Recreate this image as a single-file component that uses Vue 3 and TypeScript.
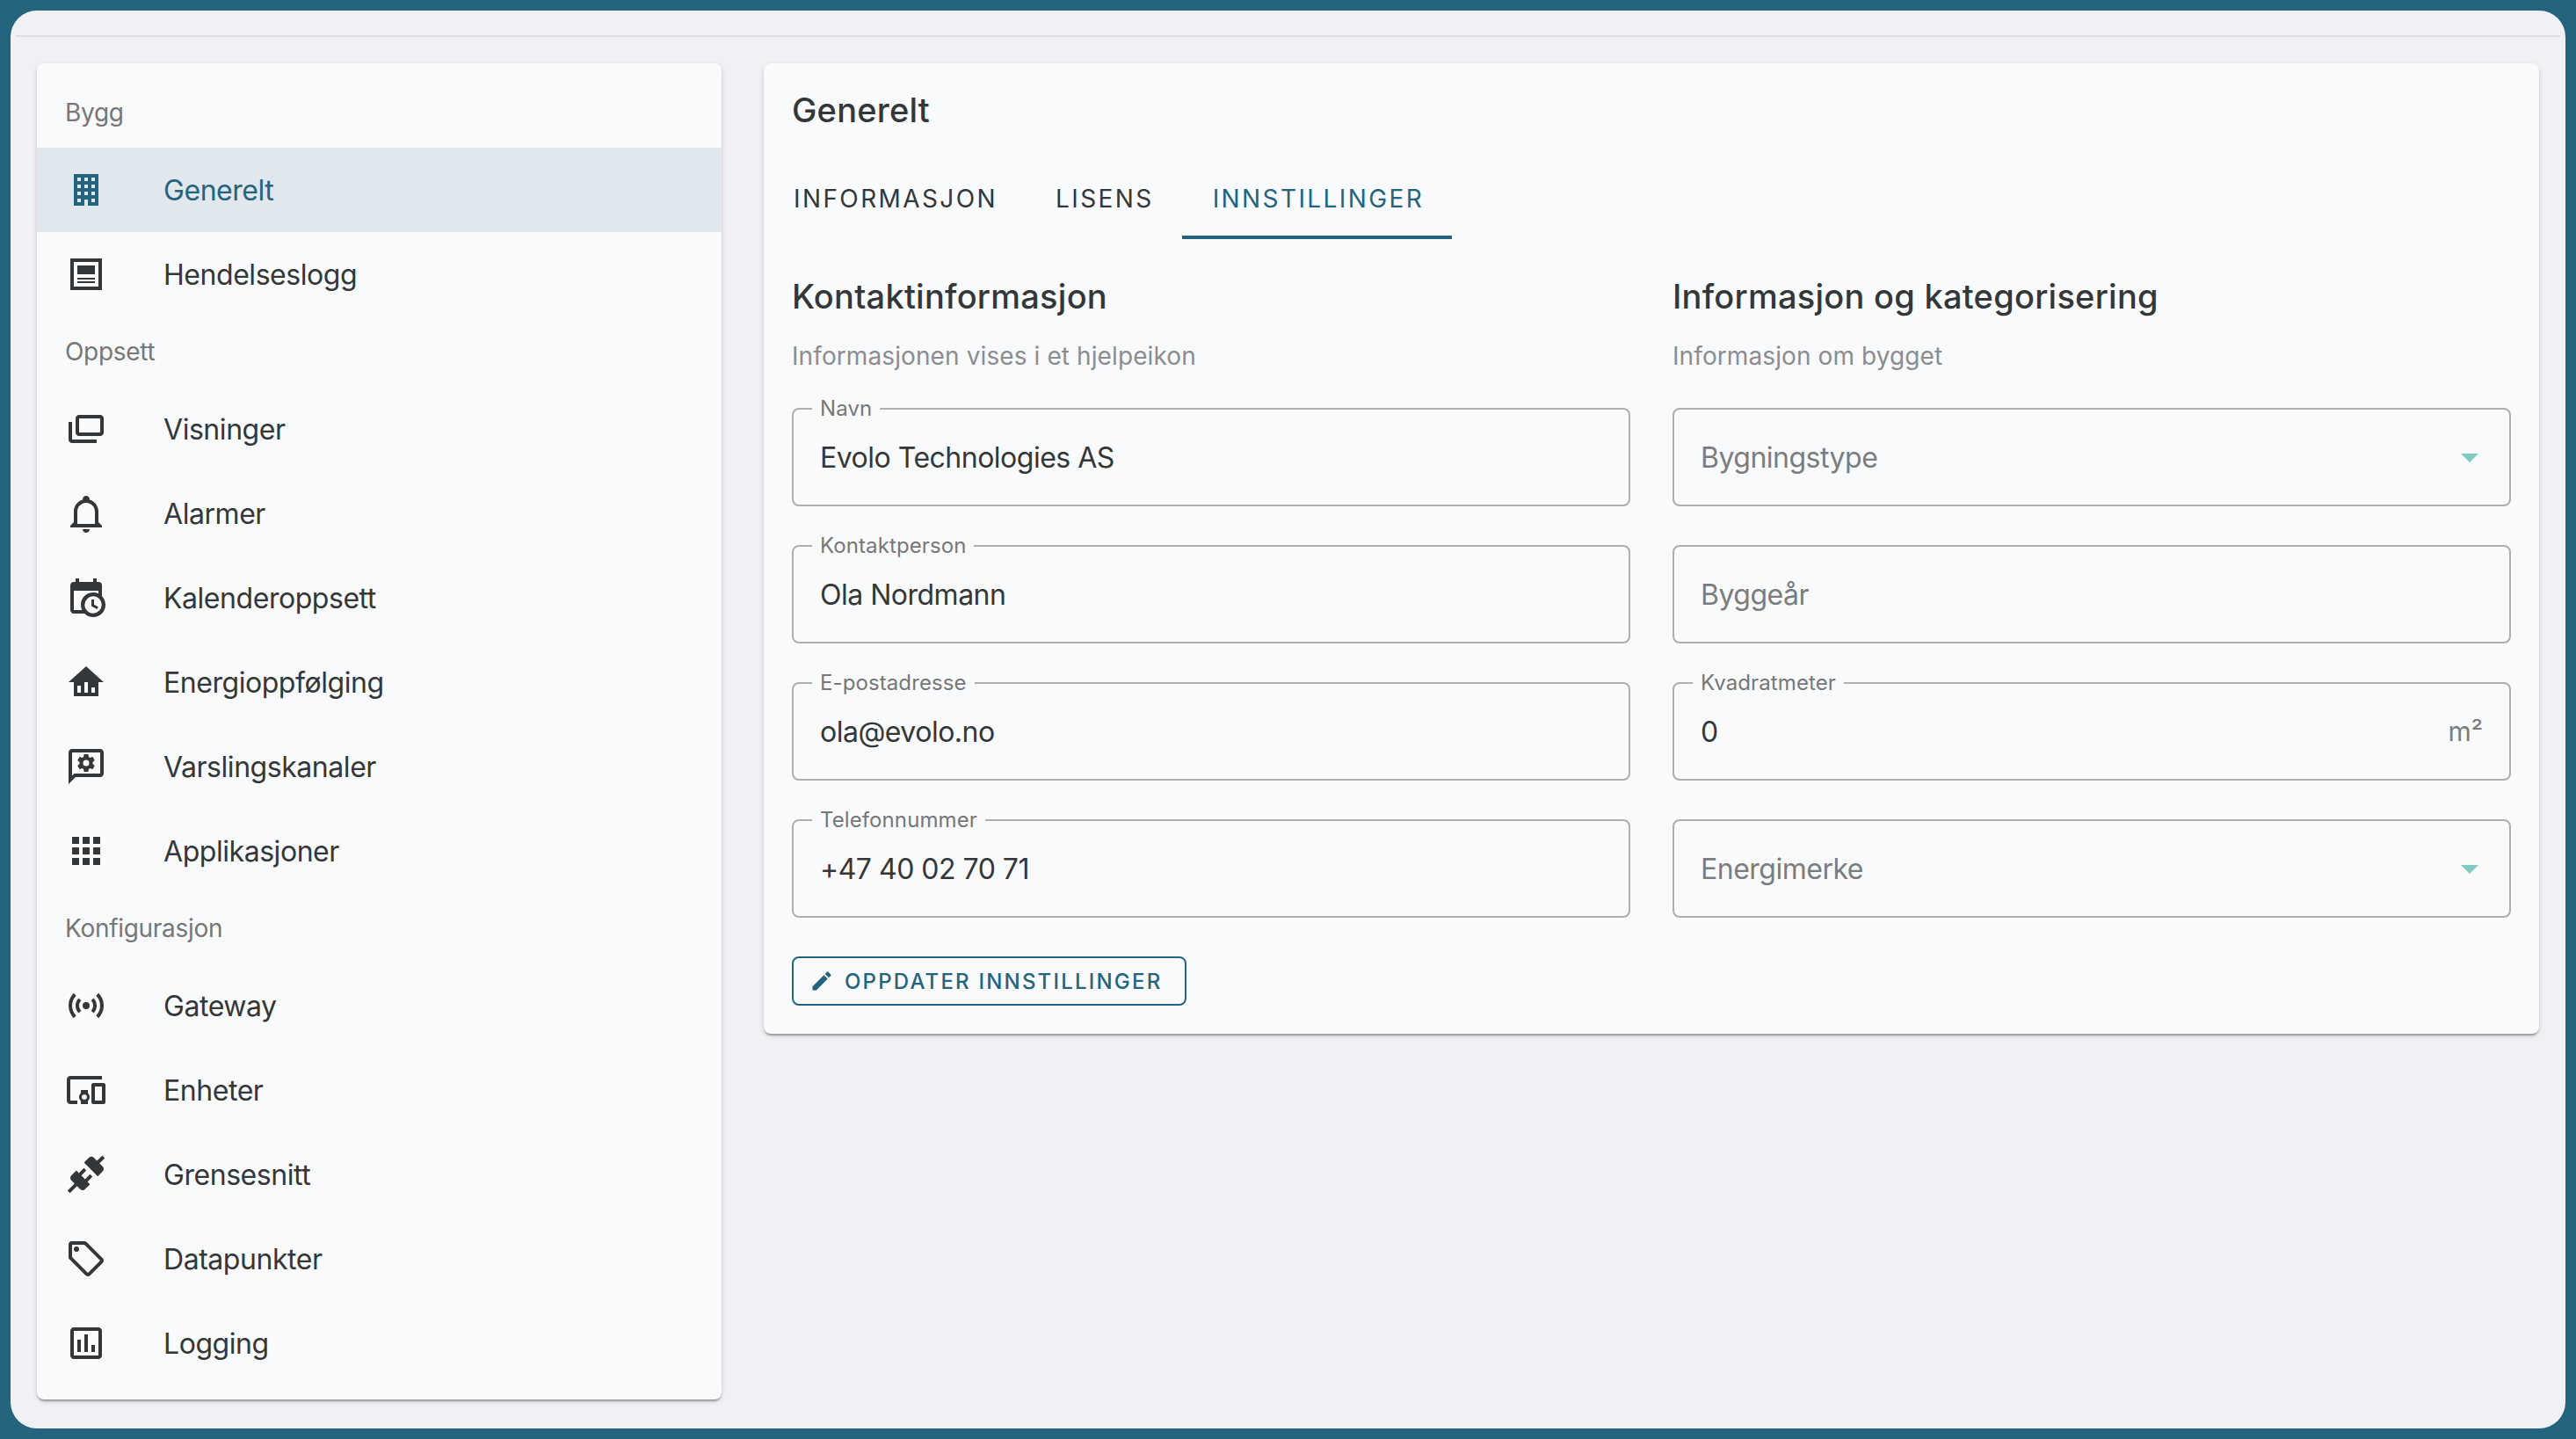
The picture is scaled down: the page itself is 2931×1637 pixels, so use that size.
<script setup lang="ts">
interface NavItem {
  label: string
  icon: string
  active?: boolean
}

interface NavGroup {
  title: string
  items: NavItem[]
}

interface Field {
  label: string
  value?: string
  placeholder?: string
  suffix?: string
  select?: boolean
}

const cog = 'M12,15.5A3.5,3.5 0 0,1 8.5,12A3.5,3.5 0 0,1 12,8.5A3.5,3.5 0 0,1 15.5,12A3.5,3.5 0 0,1 12,15.5M19.43,12.97C19.47,12.65 19.5,12.33 19.5,12C19.5,11.67 19.47,11.34 19.43,11L21.54,9.37C21.73,9.22 21.78,8.95 21.66,8.73L19.66,5.27C19.54,5.05 19.27,4.96 19.05,5.05L16.56,6.05C16.04,5.66 15.5,5.32 14.87,5.07L14.5,2.42C14.46,2.18 14.25,2 14,2H10C9.75,2 9.54,2.18 9.5,2.42L9.13,5.07C8.5,5.32 7.96,5.66 7.44,6.05L4.95,5.05C4.73,4.96 4.46,5.05 4.34,5.27L2.34,8.73C2.21,8.95 2.27,9.22 2.46,9.37L4.57,11C4.53,11.34 4.5,11.67 4.5,12C4.5,12.33 4.53,12.65 4.57,12.97L2.46,14.63C2.27,14.78 2.21,15.05 2.34,15.27L4.34,18.73C4.46,18.95 4.73,19.03 4.95,18.95L7.44,17.94C7.96,18.34 8.5,18.68 9.13,18.93L9.5,21.58C9.54,21.82 9.75,22 10,22H14C14.25,22 14.46,21.82 14.5,21.58L14.87,18.93C15.5,18.67 16.04,18.34 16.56,17.94L19.05,18.95C19.27,19.03 19.54,18.95 19.66,18.73L21.66,15.27C21.78,15.05 21.73,14.78 21.54,14.63L19.43,12.97Z'

const navGroups: NavGroup[] = [
  {
    title: 'Bygg',
    items: [
      { label: 'Generelt', active: true, icon: 'M5,3V21H11V17.5H13V21H19V3H5M7,5H9V7H7V5M11,5H13V7H11V5M15,5H17V7H15V5M7,9H9V11H7V9M11,9H13V11H11V9M15,9H17V11H15V9M7,13H9V15H7V13M11,13H13V15H11V13M15,13H17V15H15V13M7,17H9V19H7V17M15,17H17V19H15V17Z' },
      { label: 'Hendelseslogg', icon: 'M21,3H3V21H21V3M19,19H5V5H19V19M17,7H7V12H17V7M17,14H7V15H17V14M17,16H7V17H17V16Z' },
    ],
  },
  {
    title: 'Oppsett',
    items: [
      { label: 'Visninger', icon: 'M20 4H8C6.9 4 6 4.9 6 6V14C6 15.1 6.9 16 8 16H20C21.1 16 22 15.1 22 14V6C22 4.9 21.1 4 20 4M20 14H8V6H20V14M4 8H2V18C2 19.1 2.9 20 4 20H18V18H4V8Z' },
      { label: 'Alarmer', icon: 'M10 21H14C14 22.1 13.1 23 12 23S10 22.1 10 21M21 19V20H3V19L5 17V11C5 7.9 7 5.2 10 4.3V4C10 2.9 10.9 2 12 2S14 2.9 14 4V4.3C17 5.2 19 7.9 19 11V17L21 19M17 11C17 8.2 14.8 6 12 6S7 8.2 7 11V18H17V11Z' },
      { label: 'Kalenderoppsett', icon: 'M15,13H16.5V15.82L18.94,17.23L18.19,18.53L15,16.69V13M19,8H5V19H9.67C9.24,18.09 9,17.07 9,16A7,7 0 0,1 16,9C17.07,9 18.09,9.24 19,9.67V8M5,21C3.89,21 3,20.1 3,19V5C3,3.89 3.89,3 5,3H6V1H8V3H16V1H18V3H19A2,2 0 0,1 21,5V11.1C22.24,12.36 23,14.09 23,16A7,7 0 0,1 16,23C14.09,23 12.36,22.24 11.1,21H5M16,11.15A4.85,4.85 0 0,0 11.15,16C11.15,18.68 13.32,20.85 16,20.85A4.85,4.85 0 0,0 20.85,16C20.85,13.32 18.68,11.15 16,11.15Z' },
      { label: 'Energioppfølging', icon: 'M12 3L2 12H5V20H19V12H22L12 3M9 18H7V14H9V18M13 18H11V12H13V18M17 18H15V15H17V18Z' },
      { label: 'Varslingskanaler', icon: 'M20 2H4C2.9 2 2 2.9 2 4V22L6 18H20C21.1 18 22 17.1 22 16V4C22 2.9 21.1 2 20 2M20 16H5.2L4 17.2V4H20V16Z' },
      { label: 'Applikasjoner', icon: 'M16,20H20V16H16M16,14H20V10H16M10,8H14V4H10M16,8H20V4H16M10,14H14V10H10M4,14H8V10H4M4,20H8V16H4M10,20H14V16H10M4,8H8V4H4V8Z' },
    ],
  },
  {
    title: 'Konfigurasjon',
    items: [
      { label: 'Gateway', icon: 'M4.93,4.93C3.12,6.74 2,9.24 2,12C2,14.76 3.12,17.26 4.93,19.07L6.34,17.66C4.89,16.22 4,14.22 4,12C4,9.79 4.89,7.78 6.34,6.34L4.93,4.93M19.07,4.93L17.66,6.34C19.11,7.78 20,9.79 20,12C20,14.22 19.11,16.22 17.66,17.66L19.07,19.07C20.88,17.26 22,14.76 22,12C22,9.24 20.88,6.74 19.07,4.93M7.76,7.76C6.67,8.85 6,10.35 6,12C6,13.65 6.67,15.15 7.76,16.24L9.17,14.83C8.45,14.11 8,13.11 8,12C8,10.89 8.45,9.89 9.17,9.17L7.76,7.76M16.24,7.76L14.83,9.17C15.55,9.89 16,10.89 16,12C16,13.11 15.55,14.11 14.83,14.83L16.24,16.24C17.33,15.15 18,13.65 18,12C18,10.35 17.33,8.85 16.24,7.76M12,10A2,2 0 0,0 10,12A2,2 0 0,0 12,14A2,2 0 0,0 14,12A2,2 0 0,0 12,10Z' },
      { label: 'Enheter', icon: 'M3 6H21V4H3C1.9 4 1 4.9 1 6V18C1 19.1 1.9 20 3 20H7V18H3V6M13 12H9V13.78C8.39 14.33 8 15.11 8 16C8 16.89 8.39 17.67 9 18.22V20H13V18.22C13.61 17.67 14 16.88 14 16S13.61 14.33 13 13.78V12M11 17.5C10.17 17.5 9.5 16.83 9.5 16S10.17 14.5 11 14.5 12.5 15.17 12.5 16 11.83 17.5 11 17.5M22 8H16C15.5 8 15 8.5 15 9V19C15 19.5 15.5 20 16 20H22C22.5 20 23 19.5 23 19V9C23 8.5 22.5 8 22 8M21 18H17V10H21V18Z' },
      { label: 'Grensesnitt', icon: 'M21.4 7.5C22.2 8.3 22.2 9.6 21.4 10.3L18.6 13.1L10.8 5.3L13.6 2.5C14.4 1.7 15.7 1.7 16.4 2.5L18.2 4.3L21.2 1.3L22.6 2.7L19.6 5.7L21.4 7.5M15.6 13.3L14.2 11.9L11.4 14.7L9.3 12.6L12.1 9.8L10.7 8.4L7.9 11.2L6.4 9.8L3.6 12.6C2.8 13.4 2.8 14.7 3.6 15.4L5.4 17.2L1.4 21.2L2.8 22.6L6.8 18.6L8.6 20.4C9.4 21.2 10.7 21.2 11.4 20.4L14.2 17.6L12.8 16.2L15.6 13.3Z' },
      { label: 'Datapunkter', icon: 'M21.41 11.58L12.41 2.58A2 2 0 0 0 11 2H4A2 2 0 0 0 2 4V11A2 2 0 0 0 2.59 12.42L11.59 21.42A2 2 0 0 0 13 22A2 2 0 0 0 14.41 21.41L21.41 14.41A2 2 0 0 0 22 13A2 2 0 0 0 21.41 11.58M13 20L4 11V4H11L20 13M6.5 5A1.5 1.5 0 1 1 5 6.5A1.5 1.5 0 0 1 6.5 5Z' },
      { label: 'Logging', icon: 'M9 17H7V10H9V17M13 17H11V7H13V17M17 17H15V13H17V17M19 19H5V5H19V19.1M19 3H5C3.9 3 3 3.9 3 5V19C3 20.1 3.9 21 5 21H19C20.1 21 21 20.1 21 19V5C21 3.9 20.1 3 19 3Z' },
    ],
  },
]

const tabs = ['Informasjon', 'Lisens', 'Innstillinger']
const activeTab = 'Innstillinger'

const contactFields: Field[] = [
  { label: 'Navn', value: 'Evolo Technologies AS' },
  { label: 'Kontaktperson', value: 'Ola Nordmann' },
  { label: 'E-postadresse', value: 'ola@evolo.no' },
  { label: 'Telefonnummer', value: '+47 40 02 70 71' },
]

const buildingFields: Field[] = [
  { label: 'Bygningstype', placeholder: 'Bygningstype', select: true },
  { label: 'Byggeår', placeholder: 'Byggeår' },
  { label: 'Kvadratmeter', value: '0', suffix: 'm²' },
  { label: 'Energimerke', placeholder: 'Energimerke', select: true },
]

const sections = [
  { title: 'Kontaktinformasjon', sub: 'Informasjonen vises i et hjelpeikon', fields: contactFields },
  { title: 'Informasjon og kategorisering', sub: 'Informasjon om bygget', fields: buildingFields },
]
</script>

<template>
  <div class="page">
    <div class="frame">
      <div class="topbar"></div>
      <div class="content">
        <nav class="card sidebar">
          <template v-for="group in navGroups" :key="group.title">
            <div class="nav-title">{{ group.title }}</div>
            <div v-for="item in group.items" :key="item.label" class="nav-item" :class="{ active: item.active }">
              <svg class="icon" viewBox="0 0 24 24">
                <path :d="item.icon" fill-rule="evenodd" />
                <path v-if="item.label === 'Varslingskanaler'" :d="cog" fill-rule="evenodd" transform="translate(6 4) scale(.5)" />
              </svg>
              <span>{{ item.label }}</span>
            </div>
          </template>
        </nav>

        <main class="card main">
          <h1 class="title">Generelt</h1>
          <div class="tabs">
            <div v-for="tab in tabs" :key="tab" class="tab" :class="{ active: tab === activeTab }">{{ tab }}</div>
          </div>

          <div class="columns">
            <section v-for="section in sections" :key="section.title" class="column">
              <h2 class="section-title">{{ section.title }}</h2>
              <p class="section-sub">{{ section.sub }}</p>
              <div v-for="field in section.fields" :key="field.label" class="field">
                <span v-if="field.value" class="field-label">{{ field.label }}</span>
                <span v-if="field.value" class="field-value">{{ field.value }}</span>
                <span v-else class="field-placeholder">{{ field.placeholder }}</span>
                <span v-if="field.suffix" class="field-suffix">{{ field.suffix }}</span>
                <svg v-if="field.select" class="arrow" viewBox="0 0 24 24"><path d="M7,10L12,15L17,10H7Z" /></svg>
              </div>
            </section>
          </div>

          <button class="update-btn" type="button">
            <svg class="pencil" viewBox="0 0 24 24"><path d="M20.71,7.04C21.1,6.65 21.1,6 20.71,5.63L18.37,3.29C18,2.9 17.35,2.9 16.96,3.29L15.12,5.12L18.87,8.87M3,17.25V21H6.75L17.81,9.93L14.06,6.18L3,17.25Z" /></svg>
            Oppdater innstillinger
          </button>
        </main>
      </div>
    </div>
  </div>
</template>

<style>
html, body { margin: 0; background: #24647f; }
</style>

<style scoped>
.page { box-sizing: border-box; height: 1637px; padding: 12px; font-family: Inter, "Liberation Sans", sans-serif; color: #33373a; }
.frame { height: 100%; background: #f0f1f5; border-radius: 30px; overflow: hidden; }
.topbar { height: 28px; margin: 0 6px; border-bottom: 2px solid #dcdde0; }
.content { display: grid; grid-template-columns: 779px 2020px; column-gap: 48px; align-items: start; padding: 30px 30px 0; }
.card { background: #f9fafc; border-radius: 8px; box-shadow: 0 4px 2px -2px rgba(0,0,0,.2), 0 2px 2px 0 rgba(0,0,0,.14), 0 2px 6px 0 rgba(0,0,0,.12); }

.sidebar { padding: 16px 0; }
.nav-title { height: 80px; line-height: 80px; padding-left: 32px; font-size: 28px; letter-spacing: -.3px; color: #757779; }
.nav-item { height: 96px; display: flex; align-items: center; gap: 64px; padding-left: 32px; font-size: 32px; letter-spacing: -.45px; }
.nav-item.active { background: #e0e7ed; color: #24647f; }
.icon { width: 48px; height: 48px; fill: currentColor; flex: none; }

.main { padding: 32px; }
.title { margin: 0; font-size: 38px; line-height: 42px; font-weight: 500; letter-spacing: .2px; }
.tabs { display: flex; margin-top: 30px; }
.tab { height: 96px; padding: 34px 32px 0; box-sizing: border-box; font-size: 28px; line-height: 32px; font-weight: 400; letter-spacing: 2.4px; text-transform: uppercase; }
.tab.active { padding-left: 35px; padding-right: 32px; color: #24647f; border-bottom: 4px solid #24647f; }
.tab:first-child { padding-left: 2px; padding-right: 34px; }

.columns { display: grid; grid-template-columns: 954px 954px; column-gap: 48px; margin-top: 40px; }
.section-title { margin: 0; font-size: 38px; line-height: 50px; font-weight: 500; letter-spacing: .25px; }
.section-sub { margin: 24px 0 40px; font-size: 28px; line-height: 38px; letter-spacing: .1px; color: #8a8d91; }

.field { position: relative; box-sizing: border-box; height: 112px; margin-bottom: 44px; padding: 0 30px; display: flex; align-items: center; border: 2px solid #adafb2; border-radius: 8px; font-size: 32px; letter-spacing: -.5px; }
.field-label { position: absolute; left: 21px; top: -15px; padding: 0 9px; line-height: 28px; background: #f9fafc; font-size: 24px; letter-spacing: .1px; color: #757779; }
.field-value { flex: 1; }
.field-placeholder { flex: 1; color: #7a7d80; }
.field-suffix { font-size: 30px; letter-spacing: 0; color: #7a7d80; }
.arrow { width: 48px; height: 48px; margin-right: -9px; fill: #7fcbbf; }

.update-btn { display: flex; align-items: center; box-sizing: border-box; height: 56px; width: 449px; padding: 0 0 0 18px; gap: 12px; background: transparent; border: 2px solid #24647f; border-radius: 8px; font-family: inherit; font-size: 24px; font-weight: 500; letter-spacing: 2.2px; text-transform: uppercase; color: #24647f; }
.pencil { width: 28px; height: 28px; fill: currentColor; flex: none; }
</style>
